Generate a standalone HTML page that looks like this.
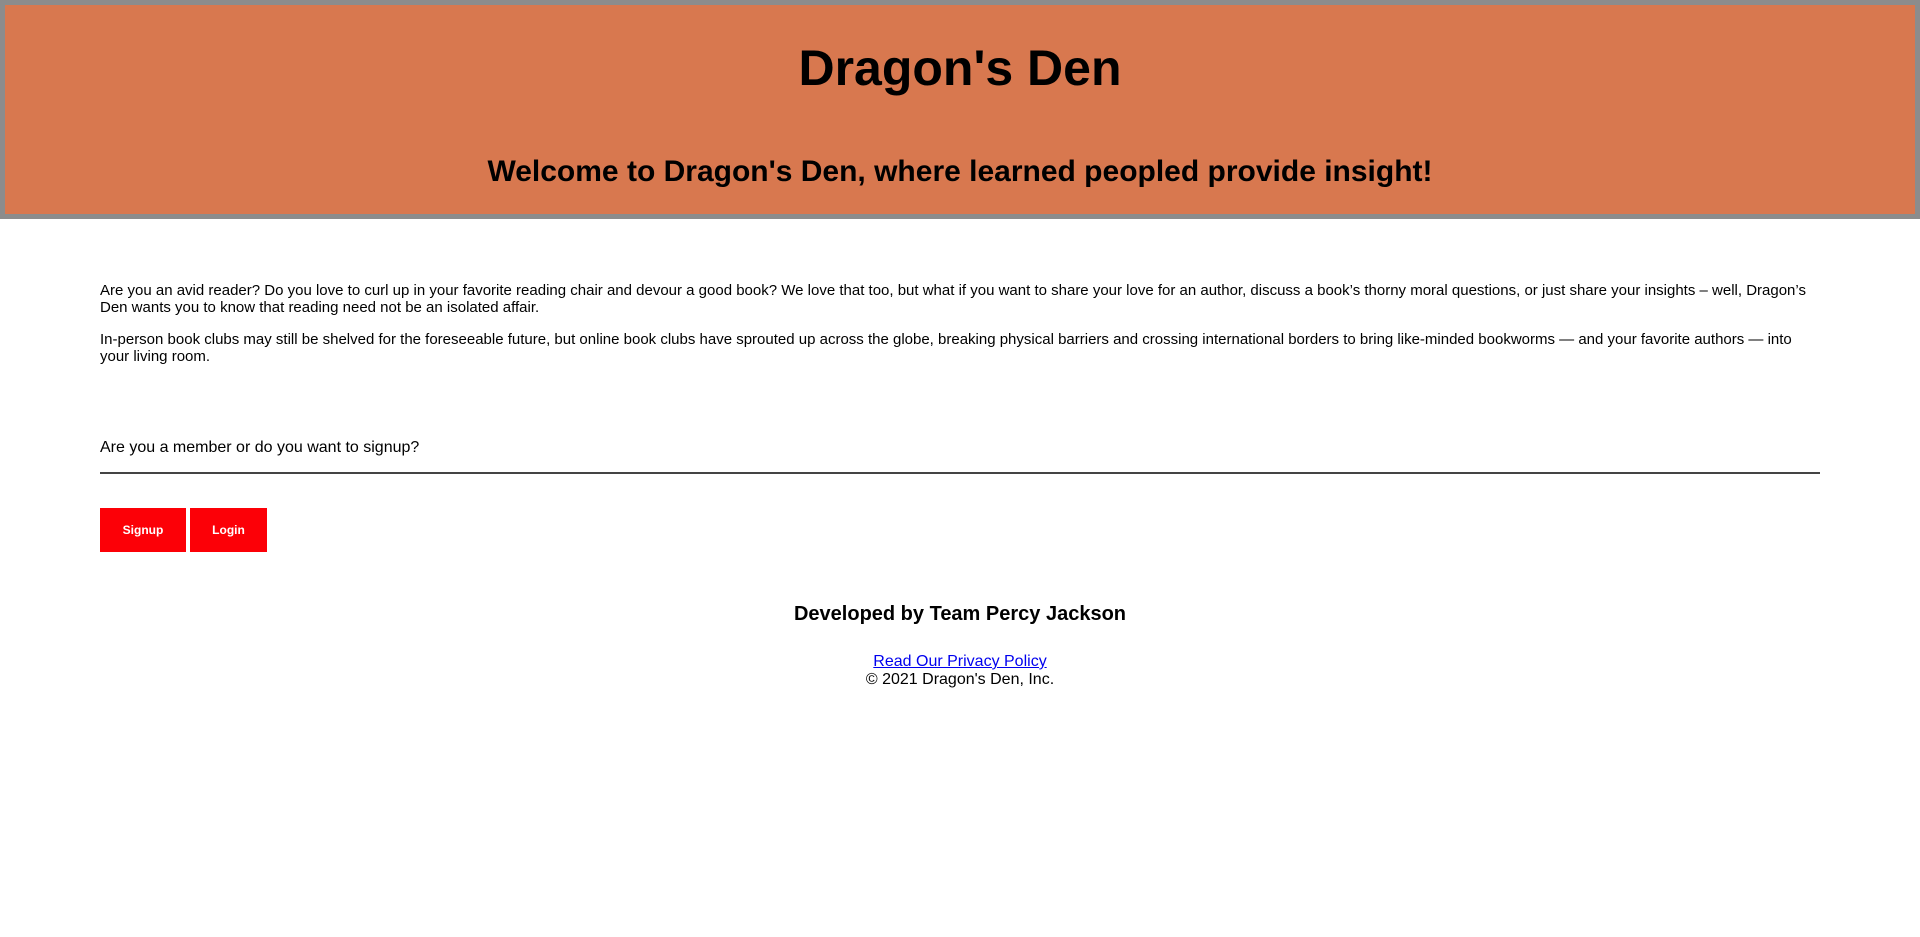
<!DOCTYPE html>
<html><head><meta charset="utf-8"><style>
body{margin:0;font-family:"Liberation Sans",Arial,sans-serif;background:#fff;color:#000;width:1920px;height:937px;overflow:hidden;position:relative}
header{position:absolute;left:0;top:0;width:1910px;height:209px;background:#d8784f;border:5px solid #8c8c8c}
.a{position:absolute;white-space:nowrap}
h1{position:absolute;left:0;width:100%;text-align:center;margin:0;font-size:50px;top:35px;line-height:56px}
h2{position:absolute;left:0;width:100%;text-align:center;margin:0;font-size:30px;top:150px;line-height:34px}
.p{position:absolute;left:100px;width:1720px;font-size:15px;line-height:17px}
.btn{position:absolute;top:508px;height:44px;background:#fc0007;color:#fff;font-size:12px;font-weight:bold;line-height:44px;text-align:center}
.c{position:absolute;left:0;width:1920px;text-align:center}
</style></head><body>
<header><h1>Dragon's Den</h1><h2>Welcome to Dragon's Den, where learned peopled provide insight!</h2></header>
<div class="p" style="top:282px">Are you an avid reader? Do you love to curl up in your favorite reading chair and devour a good book? We love that too, but what if you want to share your love for an author, discuss a book’s thorny moral questions, or just share your insights – well, Dragon’s Den wants you to know that reading need not be an isolated affair.</div>
<div class="p" style="top:331px">In-person book clubs may still be shelved for the foreseeable future, but online book clubs have sprouted up across the globe, breaking physical barriers and crossing international borders to bring like-minded bookworms — and your favorite authors — into your living room.</div>
<div class="a" style="left:100px;top:438px;font-size:16px;line-height:19px">Are you a member or do you want to signup?</div>
<div style="position:absolute;left:100px;top:472px;width:1720px;height:2px;background:#444"></div>
<div class="btn" style="left:100px;width:86px">Signup</div>
<div class="btn" style="left:190px;width:77px">Login</div>
<div class="c" style="top:602px;font-size:20px;font-weight:bold;line-height:24px">Developed by Team Percy Jackson</div>
<div class="c" style="top:653px;font-size:16px;line-height:18px"><a style="color:#0000ee;text-decoration:underline">Read Our Privacy Policy</a><br>© 2021 Dragon's Den, Inc.</div>
</body></html>
